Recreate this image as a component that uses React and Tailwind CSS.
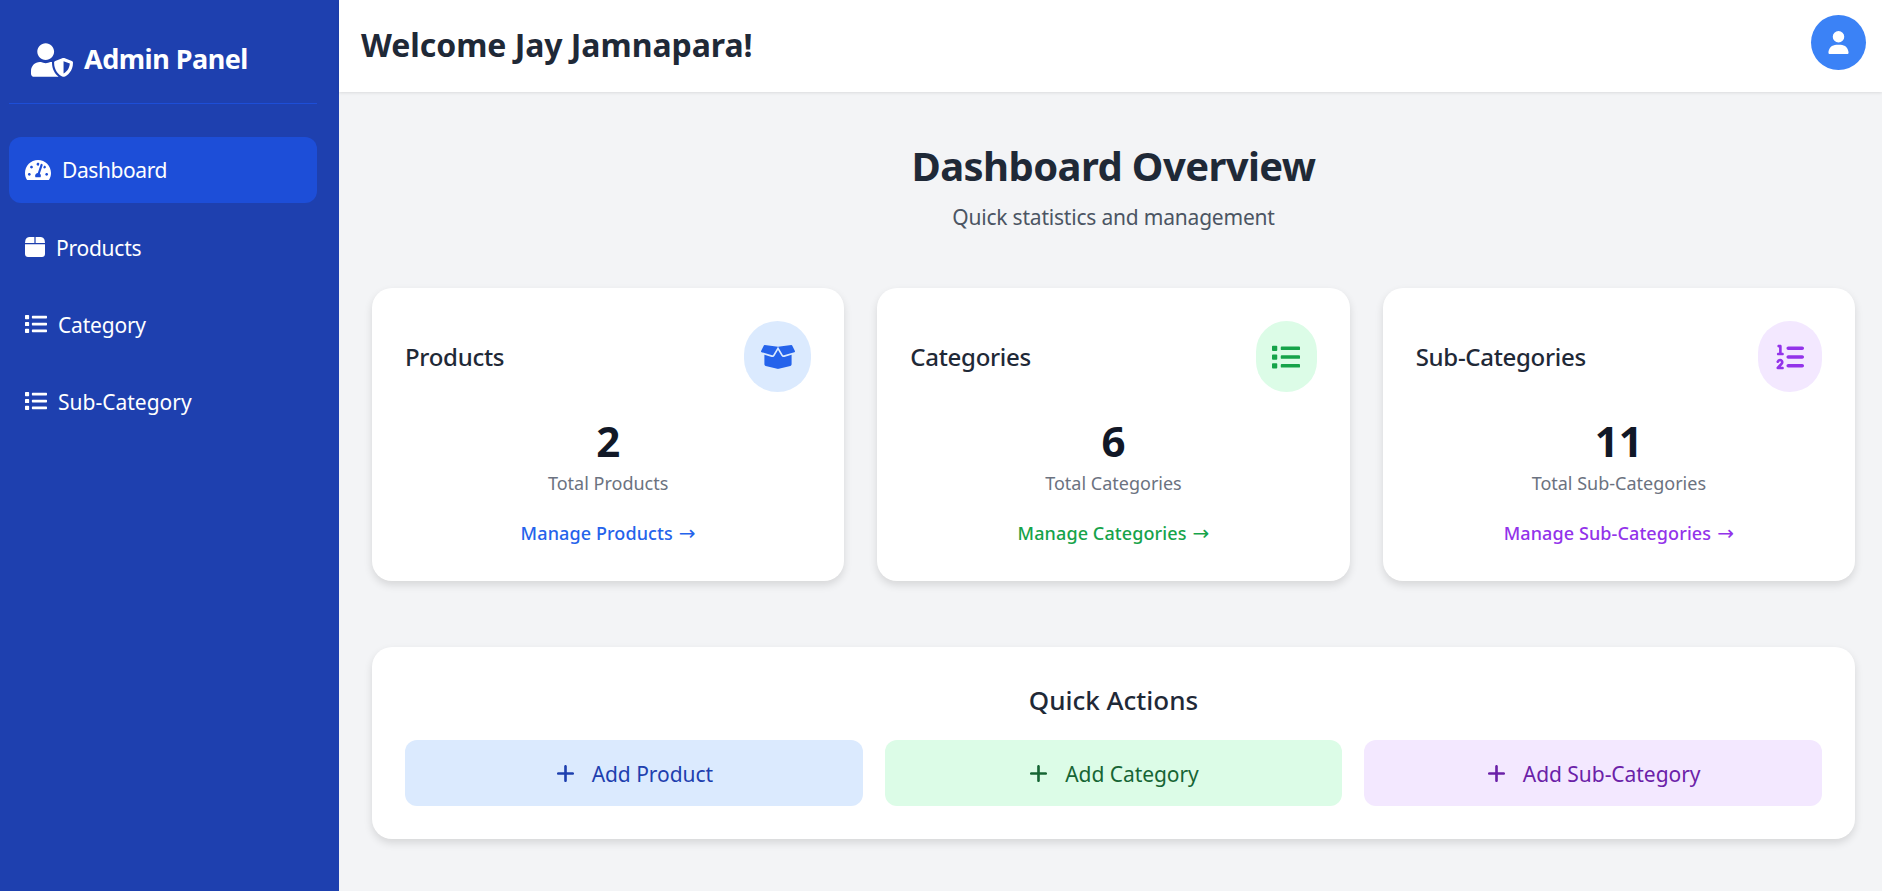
import React from "react";
import { FaUserShield, FaTachometerAlt, FaBoxOpen, FaList } from "react-icons/fa";
import { FaListOl, FaPlus, FaUser } from "react-icons/fa6";

function BoxIcon({ size = 20 }) {
  return (
    <svg width={size} height={size} viewBox="0 0 20 20" fill="currentColor">
      <path d="M9.4 0H4.5C2.6 0 1 1.2.5 2.8L0 6h9.4V0Z" />
      <path d="M10.6 0h4.9c1.9 0 3.5 1.2 4 2.8L20 6h-9.4V0Z" />
      <path d="M0 7.2h20V17c0 1.7-1.3 3-3 3H3c-1.7 0-3-1.3-3-3V7.2Z" />
    </svg>
  );
}

const nav = [
  { label: "Products", Icon: BoxIcon, size: 20, gap: "gap-[11px]", track: "tracking-[-0.25px]" },
  { label: "Category", Icon: FaList, size: 22, gap: "gap-[11px]", track: "tracking-[-0.2px]" },
  { label: "Sub-Category", Icon: FaList, size: 22, gap: "gap-[11px]", track: "tracking-[0px]" },
];

const cards = [
  { title: "Products", value: "2", sub: "Total Products", link: "Manage Products", Icon: FaBoxOpen, circle: "w-[67px] bg-[#dbeafe]", icon: "text-[#2563eb]", linkC: "text-[#2563eb]", size: 34 },
  { title: "Categories", value: "6", sub: "Total Categories", link: "Manage Categories", Icon: FaList, circle: "w-[61px] bg-[#dcfce7]", icon: "text-[#16a34a]", linkC: "text-[#16a34a]", size: 28 },
  { title: "Sub-Categories", value: "11", sub: "Total Sub-Categories", link: "Manage Sub-Categories", Icon: FaListOl, circle: "w-[64px] bg-[#f3e8ff]", icon: "text-[#9333ea]", linkC: "text-[#9333ea]", size: 28 },
];

const actions = [
  { label: "Add Product", bg: "bg-[#dbeafe]", c: "text-[#1e40af]" },
  { label: "Add Category", bg: "bg-[#dcfce7]", c: "text-[#166534]" },
  { label: "Add Sub-Category", bg: "bg-[#f3e8ff]", c: "text-[#6b21a8]" },
];

export default function App() {
  return (
    <div className="flex h-[891px] w-full overflow-hidden bg-[#f3f4f6] font-['Noto_Sans','Open_Sans',sans-serif]">
      <aside className="flex w-[339px] shrink-0 flex-col bg-[#1e40af] text-white">
        <div className="ml-[9px] mr-[22px] flex h-[104px] items-center gap-[11px] border-b border-[#1d4ed8] pl-[22px] pt-[16px]">
          <FaUserShield size={42} className="shrink-0" />
          <span className="text-[27px] font-bold tracking-[-0.5px]">Admin Panel</span>
        </div>
        <nav className="mt-[33px] ml-[9px] mr-[22px] flex flex-col gap-[11px]">
          <a className="flex h-[66px] items-center gap-[11px] rounded-[12px] bg-[#1d4ed8] pl-[16px] text-[21px] tracking-[-0.4px]">
            <FaTachometerAlt size={26} />
            <span className="pt-[2px]">Dashboard</span>
          </a>
          {nav.map(({ label, Icon, gap, size, track }) => (
            <a key={label} className={`flex h-[66px] items-center ${gap} pl-[16px] text-[21px] ${track}`}>
              <Icon size={size} />
              <span className="pt-[4px]">{label}</span>
            </a>
          ))}
        </nav>
      </aside>
      <div className="flex min-w-0 flex-1 flex-col">
        <header className="flex h-[92px] shrink-0 items-center justify-between bg-white pb-[7px] pl-[22px] pr-[16px] shadow-[0_1px_3px_rgba(0,0,0,0.1)]">
          <h1 className="mt-[4px] text-[32px] font-bold tracking-[-0.05px] text-[#1f2937]">Welcome Jay Jamnapara!</h1>
          <div className="flex h-[55px] w-[55px] items-center justify-center rounded-full bg-[#3b82f6] text-white">
            <FaUser size={23} />
          </div>
        </header>
        <main className="flex flex-col pl-[33px] pr-[27px] pt-[46px]">
          <h2 className="text-center text-[40px] leading-[56px] font-bold tracking-[-0.6px] text-[#1f2937]">Dashboard Overview</h2>
          <p className="mt-[8px] text-center text-[21px] leading-[30px] tracking-[-0.2px] text-[#4b5563]">Quick statistics and management</p>
          <div className="mt-[56px] grid grid-cols-3 gap-[33px]">
            {cards.map((c) => (
              <section key={c.title} className="flex h-[293px] flex-col rounded-[20px] bg-white px-[33px] pt-[33px] shadow-[0_4px_8px_rgba(0,0,0,0.12)]">
                <div className="flex items-center justify-between">
                  <h3 className="text-[24px] font-medium tracking-[-0.3px] text-[#1f2937]">{c.title}</h3>
                  <div className={`flex h-[71px] items-center justify-center rounded-full ${c.circle} ${c.icon}`}>
                    <c.Icon size={c.size} />
                  </div>
                </div>
                <div className="mt-[21px] text-center text-[42px] leading-[56px] font-bold text-[#111827]">{c.value}</div>
                <div className="mt-[1px] text-center text-[18px] leading-[26px] text-[#6b7280]">{c.sub}</div>
                <div className={`mt-[24px] flex items-center justify-center gap-[6px] text-[18px] leading-[26px] font-medium tracking-[0.1px] ${c.linkC}`}>
                  <span>{c.link}</span>
                  <span className="font-['DejaVu_Sans'] text-[20px] font-normal">→</span>
                </div>
              </section>
            ))}
          </div>
          <section className="mt-[66px] flex h-[192px] flex-col rounded-[20px] bg-white px-[33px] pt-[35px] shadow-[0_4px_8px_rgba(0,0,0,0.12)]">
            <h3 className="text-center text-[26px] leading-[36px] font-medium tracking-[0px] text-[#1f2937]">Quick Actions</h3>
            <div className="mt-[22px] grid grid-cols-3 gap-[22px]">
              {actions.map((a) => (
                <button key={a.label} className={`flex h-[66px] items-center justify-center gap-[16px] rounded-[12px] text-[21px] tracking-[-0.05px] ${a.bg} ${a.c}`}>
                  <FaPlus size={21} />
                  <span className="pt-[3px]">{a.label}</span>
                </button>
              ))}
            </div>
          </section>
        </main>
      </div>
    </div>
  );
}
